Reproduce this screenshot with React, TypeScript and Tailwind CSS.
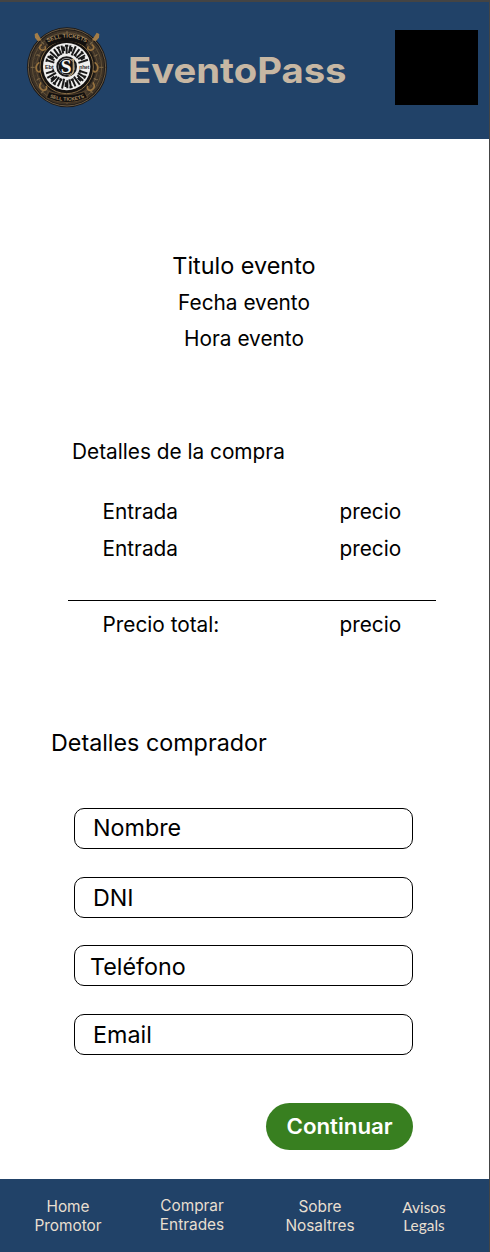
const dialMarks = Array.from({ length: 30 }, (_, i) => i * 12).filter(
  (a) => !(a > 72 && a < 108) && !(a > 252 && a < 288),
);
const rimMarks = Array.from({ length: 48 }, (_, i) => i * 7.5);

function Logo() {
  return (
    <svg className="h-[84px] w-[84px] shrink-0" viewBox="0 0 252 252" aria-label="Logo">
      <circle cx="126" cy="127" r="120" fill="#1d1916" />
      <circle cx="126" cy="127" r="116" fill="none" stroke="#6a5a44" strokeWidth="3" />
      <circle cx="126" cy="127" r="99" fill="none" stroke="#3d3226" strokeWidth="26" />
      <circle cx="126" cy="127" r="104" fill="none" stroke="#75603f" strokeWidth="2" />
      <circle cx="126" cy="127" r="92" fill="none" stroke="#5d4a33" strokeWidth="3" />
      {rimMarks.map((a, i) => (
        <path
          key={a}
          d={i % 2 === 0 ? "M126 18 v12" : "M124 28 q6 4 1 12"}
          fill="none"
          stroke={i % 3 === 0 ? "#7f6947" : "#4e4030"}
          strokeWidth="3"
          transform={`rotate(${a} 126 127)`}
        />
      ))}
      <path d="M29 27 L37 23 L44 36 L50 46 L38 48 L30 38 Z M223 27 L215 23 L207 36 L201 46 L213 48 L222 38 Z" fill="#a37d48" />
      <circle cx="125" cy="126" r="80" fill="#14110f" stroke="#8a6f48" strokeWidth="3" />
      <path
        d="M50 58 q-14 12 2 18 q14 -2 8 -12 M200 58 q14 12 -2 18 q-14 -2 -8 -12 M43 112 q-14 10 -8 24 q8 10 12 0 M209 112 q14 10 8 24 q-8 10 -12 0 M48 172 q-10 16 6 24 q14 0 10 -14 M204 172 q10 16 -6 24 q-14 0 -10 -14"
        fill="none"
        stroke="#98733f"
        strokeWidth="5"
      />
      <path d="M60 46 Q126 10 190 46 L180 64 Q126 34 72 64 Z" fill="#12100f" />
      <path d="M72 200 Q126 218 178 200 L188 218 Q126 248 64 218 Z" fill="#12100f" stroke="#6f5636" strokeWidth="2" />
      <path id="rim-top" d="M62 56 Q126 20 190 56" fill="none" />
      <path id="rim-bottom" d="M68 215 Q126 240 184 215" fill="none" />
      <text fill="#a98d62" fontSize="17" fontWeight="700" fontFamily="Liberation Sans, sans-serif">
        <textPath href="#rim-top" startOffset="50%" textAnchor="middle">SELL TICKETS</textPath>
      </text>
      <text fill="#a98d62" fontSize="15" fontWeight="700" fontFamily="Liberation Sans, sans-serif">
        <textPath href="#rim-bottom" startOffset="50%" textAnchor="middle">SELL TICKETS</textPath>
      </text>
      <circle cx="125" cy="125" r="71" fill="#efefee" />
      {dialMarks.map((a, i) => (
        <path
          key={a}
          d={
            i % 4 === 0
              ? "M125 59 V86 M120 62 h10"
              : i % 4 === 1
                ? "M123 60 V84 M128 64 V78"
                : i % 4 === 2
                  ? "M125 58 V88"
                  : "M125 60 V86 M121 83 h9"
          }
          fill="none"
          stroke="#181818"
          strokeWidth="6"
          transform={`rotate(${a} 125 125)`}
        />
      ))}
      <g fill="#222222" fontSize="17" fontWeight="700" fontFamily="Liberation Sans, sans-serif" textAnchor="middle">
        <text x="73" y="131" textLength="26">Ebt</text>
        <text x="178" y="131" textLength="30" lengthAdjust="spacingAndGlyphs">nhet</text>
      </g>
      <circle cx="125" cy="125" r="28" fill="#efefee" stroke="#1a1a1a" strokeWidth="6" />
      <circle cx="125" cy="125" r="24" fill="#161616" />
      <text x="123" y="145" fill="#f6f6f4" fontSize="58" fontWeight="700" fontFamily="Liberation Serif, serif" textAnchor="middle">S</text>
      <path d="M139 104 h6 V140 q-3 10 -14 13" fill="none" stroke="#b7a078" strokeWidth="4" />
    </svg>
  );
}

function Row({ label, price, className }: { label: string; price: string; className: string }) {
  return (
    <div className={`flex pl-[102.5px] text-[20.8px] leading-[36px] ${className}`}>
      <span className="w-[237px]">{label}</span>
      <span>{price}</span>
    </div>
  );
}

function Field({ label, pad }: { label: string; pad: string }) {
  return (
    <div className={`flex h-[41px] w-[339px] items-center rounded-[10px] border border-black text-[23.3px] leading-[36px] ${pad}`}>
      {label}
    </div>
  );
}

export default function App() {
  return (
    <div className="flex h-[1252px] w-[490px] flex-col overflow-hidden border-t-2 border-r border-[#444444] bg-white font-['Inter',sans-serif] text-black">
      <header className="flex h-[137px] shrink-0 bg-[#214268] pt-[23px] pl-[25px]">
        <Logo />
        <h1 className="ml-[19px] h-[46px] w-[240px] origin-left scale-x-[1.093] pt-[22px] text-[35px] leading-[46px] font-bold whitespace-nowrap text-[#c7b7a3]">
          EventoPass
        </h1>
        <div className="mt-[5px] ml-[27px] h-[75px] w-[83px] shrink-0 bg-black" />
      </header>

      <main className="flex h-[1040px] shrink-0 flex-col">
        <section className="mt-[109px] flex flex-col items-center pr-px">
          <h2 className="text-[23.4px] leading-[36px]">Titulo evento</h2>
          <p className="mt-[1px] text-[20.8px] leading-[36px]">Fecha evento</p>
          <p className="text-[20.8px] leading-[36px]">Hora evento</p>
        </section>

        <section className="mt-[77px]">
          <h3 className="pl-[72px] text-[20.8px] leading-[36px]">Detalles de la compra</h3>
          <Row label="Entrada" price="precio" className="mt-[24px]" />
          <Row label="Entrada" price="precio" className="mt-[1px]" />
          <hr className="mt-[33px] ml-[68px] w-[368px] border-t border-black" />
          <Row label="Precio total:" price="precio" className="mt-[6px]" />
        </section>

        <section className="mt-[82px]">
          <h3 className="pl-[51px] text-[23.3px] leading-[36px]">Detalles comprador</h3>
          <form className="mt-[47px] flex flex-col gap-[27.6px] pl-[74px]">
            <Field label="Nombre" pad="pl-[18px] pb-[2px]" />
            <Field label="DNI" pad="pl-[18px] pt-[2px]" />
            <Field label="Teléfono" pad="pl-[15px] pt-[2px]" />
            <Field label="Email" pad="pl-[18px] pt-[2px]" />
            <button type="button" className="mt-[21px] ml-[192px] h-[47px] w-[147px] rounded-full bg-[#387f20] text-[20.8px] font-semibold text-white">
              <span className="inline-block scale-x-[1.07]">Continuar</span>
            </button>
          </form>
        </section>
      </main>

      <footer className="flex h-[73px] shrink-0 bg-[#214268] text-center text-[15.4px] leading-[19.4px] text-[#e8dfd0]">
        <div className="ml-[28px] w-[80px] pt-[18px]">Home<br />Promotor</div>
        <div className="ml-[44px] w-[80px] pt-[17px]">Comprar<br />Entrades</div>
        <div className="ml-[48px] w-[80px] pt-[18px]">Sobre<br />Nosaltres</div>
        <div className="ml-[24px] w-[80px] pt-[19px] font-['Lato',sans-serif] leading-[18.4px]">Avisos<br />Legals</div>
      </footer>
    </div>
  );
}
